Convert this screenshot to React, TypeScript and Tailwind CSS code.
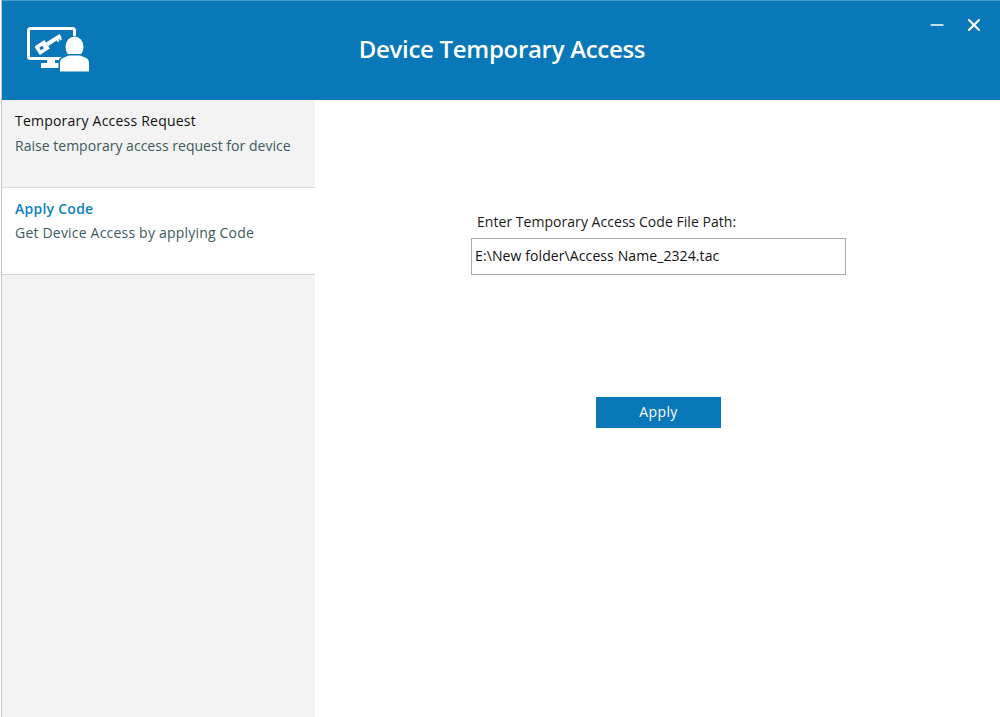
import { Minus, X } from "lucide-react";

const font = "font-['Open_Sans','Noto_Sans',sans-serif]";

function AppLogo() {
  return (
    <svg className="block" width="64" height="48" viewBox="0 0 64 48" fill="none">
      {/* monitor */}
      <rect x="1.5" y="1.5" width="46" height="30" rx="2" stroke="white" strokeWidth="3" />
      <rect x="20" y="32" width="8" height="5" fill="white" />
      <rect x="14" y="36" width="22" height="5" rx="0.5" fill="white" />
      {/* key */}
      <g transform="rotate(-33 16 20)">
        <path
          fillRule="evenodd"
          d="M10 15h11v10H10a1 1 0 0 1-1-1v-8a1 1 0 0 1 1-1zm2.500 3.500v3h3.500v-3z"
          fill="white"
        />
        <path d="M21 18h16v4h-1v2h-2v-2h-1v2h-2v-2H21z" fill="white" />
      </g>
      {/* person */}
      <ellipse cx="47.500" cy="20" rx="9" ry="10.500" fill="white" stroke="#0878b8" strokeWidth="1.500" paintOrder="stroke" />
      <path
        d="M33 44.500v-9c0-2.500 1.500-4 4-5l5-2h11l5 2c2.500 1 4 2.500 4 5v9z"
        fill="white"
        stroke="#0878b8"
        strokeWidth="3"
        paintOrder="stroke"
      />
    </svg>
  );
}

export default function App() {
  return (
    <div className={`h-[717px] w-[1000px] overflow-hidden bg-white pl-[1px] ${font}`}>
      <div className="h-full border-l border-[#c8c8c8] flex flex-col">
        <header className="h-[100px] shrink-0 bg-[#0878b8] border-t border-[#4b9cca] flex items-center relative">
          <div className="w-[87px] pl-[25px] pt-[26px] shrink-0 self-start">
            <AppLogo />
          </div>
          <h1 className="flex-1 text-center text-[24px] font-semibold text-white pr-[85px] pb-[4px] tracking-[-0.3px]">
            Device Temporary Access
          </h1>
          <div className="absolute right-[16px] top-[14px] flex items-center gap-[17px] text-white">
            <Minus size={20} strokeWidth={2} />
            <X size={20} strokeWidth={2.500} />
          </div>
        </header>

        <div className="flex flex-1 min-h-0">
          <aside className="w-[313px] shrink-0 bg-[#f3f3f3]">
            <div className="h-[88px] border-b border-[#dcdcdc] pl-[13px] pt-[10px]">
              <div className="text-[14px] leading-[22px] font-medium text-[#111] tracking-[0.22px]">
                Temporary Access Request
              </div>
              <div className="mt-[3px] text-[14px] leading-[22px] text-[#3d5a5e] tracking-[0.02px]">
                Raise temporary access request for device
              </div>
            </div>
            <div className="h-[87px] bg-white border-b border-[#d4d4d4] pl-[13px] pt-[10px]">
              <div className="text-[14px] leading-[22px] font-semibold text-[#0e7fbf] tracking-[0.25px]">
                Apply Code
              </div>
              <div className="mt-[2px] text-[14px] leading-[22px] text-[#3d5a5e] tracking-[0.2px]">
                Get Device Access by applying Code
              </div>
            </div>
          </aside>

          <main className="flex-1 pl-[156px] pt-[111px]">
            <div className="pl-[6px] text-[14px] leading-[22px] text-[#1a1a1a] tracking-[0.04px]">
              Enter Temporary Access Code File Path:
            </div>
            <div className="mt-[5px] h-[37px] w-[375px] border border-[#a9a9a9] pl-[3px] pb-[3px] flex items-center text-[14px] text-[#111] tracking-[0.1px]">
              E:\New folder\Access Name_2324.tac
            </div>
            <button className="mt-[122px] ml-[125px] block h-[31px] w-[125px] bg-[#0878b8] pb-[3px] text-[14px] text-white tracking-[0.4px]">
              Apply
            </button>
          </main>
        </div>
      </div>
    </div>
  );
}
